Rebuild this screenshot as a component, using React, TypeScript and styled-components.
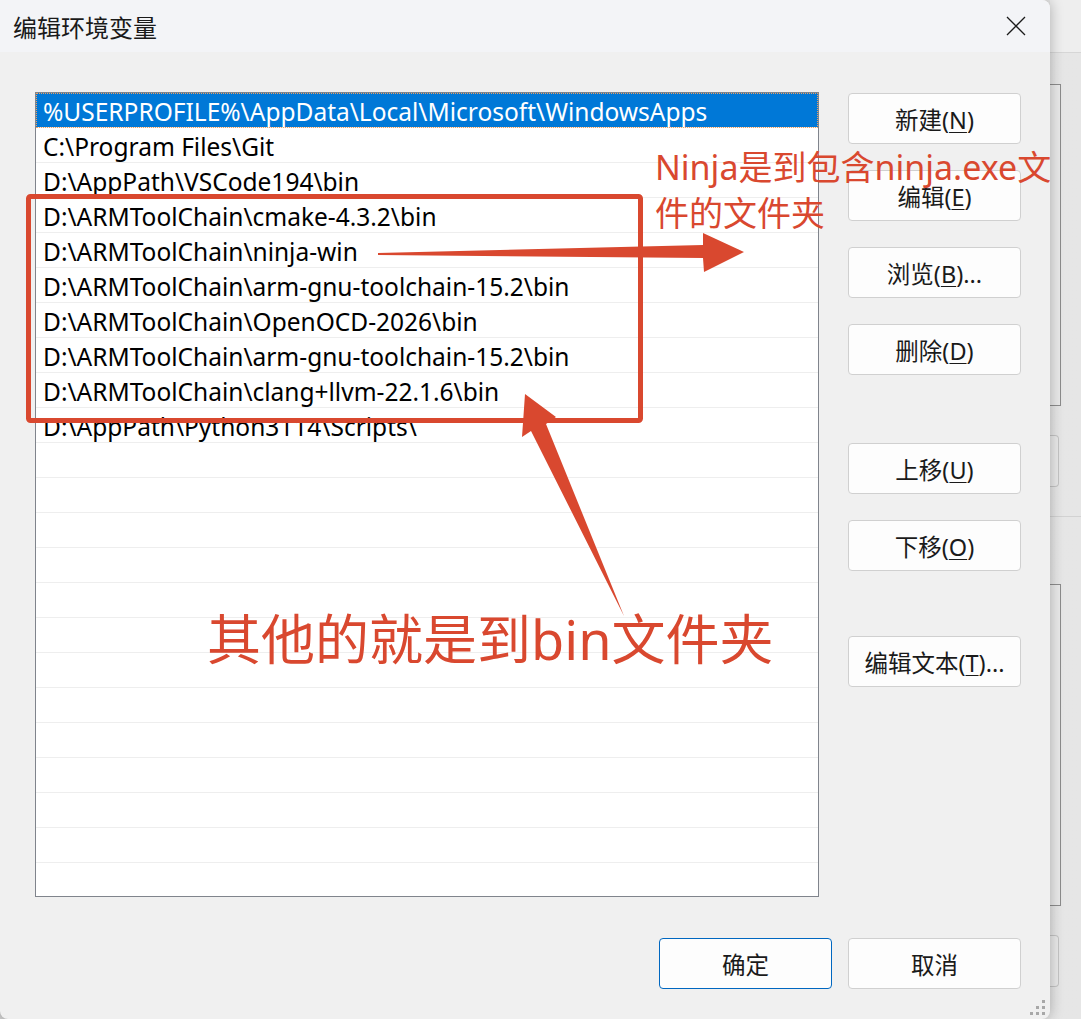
import React from 'react';
import styled, { createGlobalStyle } from 'styled-components';

const GlobalStyle = createGlobalStyle`
  html, body {
    margin: 0;
    padding: 0;
    background: #e4e4e4;
  }
  body {
    font-family: "Noto Sans", "Noto Sans CJK SC", sans-serif;
    color: #1a1a1a;
  }
`;

const RED = '#d9482f';

const paths = [
  '%USERPROFILE%\\AppData\\Local\\Microsoft\\WindowsApps',
  'C:\\Program Files\\Git',
  'D:\\AppPath\\VSCode194\\bin',
  'D:\\ARMToolChain\\cmake-4.3.2\\bin',
  'D:\\ARMToolChain\\ninja-win',
  'D:\\ARMToolChain\\arm-gnu-toolchain-15.2\\bin',
  'D:\\ARMToolChain\\OpenOCD-2026\\bin',
  'D:\\ARMToolChain\\arm-gnu-toolchain-15.2\\bin',
  'D:\\ARMToolChain\\clang+llvm-22.1.6\\bin',
  'D:\\AppPath\\Python3114\\Scripts\\',
];

const ROW_COUNT = 23;

const Page = styled.div`
  display: flex;
  width: 1081px;
  height: 1019px;
  overflow: hidden;
  background: linear-gradient(90deg, #cfcfcf 0%, #e2e2e2 40%, #e6e6e6 100%);
`;

const Dialog = styled.div`
  position: relative;
  flex-shrink: 0;
  width: 1050px;
  height: 1019px;
  display: flex;
  flex-direction: column;
  background: #f0f0f0;
  border-radius: 0 8px 8px 8px;
  box-shadow: 0 0 14px rgba(0, 0, 0, 0.28);
  overflow: hidden;
  z-index: 1;
`;

const TitleBar = styled.div`
  height: 52px;
  flex-shrink: 0;
  display: flex;
  align-items: center;
  justify-content: space-between;
  padding: 0 24px 0 13px;
  background: #f3f4f7;
`;

const Title = styled.span`
  font-family: "Noto Sans CJK SC", sans-serif;
  font-size: 24px;
  color: #1a1a1a;
`;

const Close = styled.svg`
  width: 20px;
  height: 20px;
`;

const Body = styled.div`
  display: flex;
  flex-direction: column;
  padding: 40px 29px 0 35px;
`;

const Main = styled.div`
  display: grid;
  grid-template-columns: 784px 173px;
  column-gap: 29px;
`;

const ListBox = styled.div`
  height: 805px;
  box-sizing: border-box;
  border: 1px solid #80848c;
  background: #ffffff;
  overflow: hidden;
`;

const Row = styled.div<{ $selected?: boolean }>`
  height: 35px;
  box-sizing: border-box;
  display: flex;
  align-items: center;
  padding: 2px 0 0 7px;
  font-size: 24.5px;
  white-space: nowrap;
  border-bottom: 1px solid #eeeeee;
  color: ${({ $selected }) => ($selected ? '#ffffff' : '#000000')};
  background: ${({ $selected }) => ($selected ? '#0078d7' : 'transparent')};
  outline: ${({ $selected }) => ($selected ? '1px dotted #f0a060' : 'none')};
  outline-offset: -1px;
`;

const ButtonColumn = styled.div`
  display: flex;
  flex-direction: column;
  gap: 26px;
  padding-top: 1px;
`;

const Button = styled.button<{ $primary?: boolean; $gapBefore?: number }>`
  width: 173px;
  height: 51px;
  flex-shrink: 0;
  margin-top: ${({ $gapBefore }) => $gapBefore ?? 0}px;
  box-sizing: border-box;
  font-family: "Noto Sans", "Noto Sans CJK SC", sans-serif;
  font-size: 23.5px;
  color: #1a1a1a;
  background: #fdfdfd;
  border: 1px solid ${({ $primary }) => ($primary ? '#0067c0' : '#d0d0d0')};
  border-radius: 4px;
  padding: 0;

  u {
    text-underline-offset: 3px;
    text-decoration-thickness: 1px;
  }
`;

const Footer = styled.div`
  display: flex;
  justify-content: flex-end;
  gap: 16px;
  margin-top: 41px;
`;

const Grip = styled.svg`
  position: absolute;
  right: 3px;
  bottom: 2px;
  width: 18px;
  height: 18px;
`;

/* markup layered over the dialog */
const Marks = styled.svg`
  position: absolute;
  left: 0;
  top: 0;
  width: 1050px;
  height: 1019px;
  pointer-events: none;
`;

const Note = styled.div<{ $size: number; $line: number }>`
  position: absolute;
  font-family: "Noto Sans", "Noto Sans CJK SC", sans-serif;
  font-size: ${({ $size }) => $size}px;
  line-height: ${({ $line }) => $line}px;
  color: ${RED};
  white-space: nowrap;
  pointer-events: none;

  span {
    display: block;
  }
`;

/* window behind the dialog */
const BackStrip = styled.div`
  flex: 1;
  display: flex;
  flex-direction: column;
`;

const BackTitle = styled.div`
  height: 52px;
  background: #eeeeee;
  border-bottom: 1px solid #d6d6d6;
`;

const BackFrame = styled.div<{ $top: number; $height: number }>`
  width: 11px;
  height: ${({ $height }) => $height}px;
  margin-top: ${({ $top }) => $top}px;
  box-sizing: border-box;
  border: 1px solid #8c8c8c;
  border-left: none;
  background: rgba(255, 255, 255, 0.15);
`;

const BackButton = styled.div<{ $top: number }>`
  width: 9px;
  height: 52px;
  margin-top: ${({ $top }) => $top}px;
  box-sizing: border-box;
  border: 1px solid #c4c4c4;
  border-left: none;
  border-radius: 0 4px 4px 0;
  background: #e9e9e9;
`;

const BackRule = styled.div<{ $top: number }>`
  height: 1px;
  margin-top: ${({ $top }) => $top}px;
  background: #d2d2d2;
`;

const Key: React.FC<{ label: string; k: string; tail?: string }> = ({ label, k, tail = '' }) => (
  <>
    {label}(<u>{k}</u>){tail}
  </>
);

export default function App() {
  const rows = Array.from({ length: ROW_COUNT }, (_, i) => paths[i] ?? '');

  return (
    <>
      <GlobalStyle />
      <Page>
        <Dialog>
          <TitleBar>
            <Title>编辑环境变量</Title>
            <Close viewBox="0 0 20 20">
              <path d="M1 1 L19 19 M19 1 L1 19" stroke="#1a1a1a" strokeWidth="1.3" fill="none" />
            </Close>
          </TitleBar>
          <Body>
            <Main>
              <ListBox>
                {rows.map((p, i) => (
                  <Row key={i} $selected={i === 0}>
                    {p}
                  </Row>
                ))}
              </ListBox>
              <ButtonColumn>
                <Button><Key label="新建" k="N" /></Button>
                <Button><Key label="编辑" k="E" /></Button>
                <Button><Key label="浏览" k="B" tail="..." /></Button>
                <Button><Key label="删除" k="D" /></Button>
                <Button $gapBefore={42}><Key label="上移" k="U" /></Button>
                <Button><Key label="下移" k="O" /></Button>
                <Button $gapBefore={39}><Key label="编辑文本" k="T" tail="..." /></Button>
              </ButtonColumn>
            </Main>
            <Footer>
              <Button $primary>确定</Button>
              <Button>取消</Button>
            </Footer>
          </Body>

          <Marks viewBox="0 0 1050 1019">
            <rect x="28.5" y="196.5" width="612" height="224" rx="2" fill="none" stroke={RED} strokeWidth="5" />
            <polygon points="378,253 703,245 703,233 744,252 704,272 703,258 378,255" fill={RED} />
            <polygon points="525,394 556,417 546,424 624,616 531,431 522,437" fill={RED} />
          </Marks>
          <Note $size={34} $line={46} style={{ left: 655, top: 144 }}>
            <span>Ninja是到包含ninja.exe文</span>
            <span>件的文件夹</span>
          </Note>
          <Note $size={54} $line={60} style={{ left: 207, top: 609 }}>
            其他的就是到bin文件夹
          </Note>

          <Grip viewBox="0 0 18 18">
            {[
              [13, 1],
              [7, 7],
              [13, 7],
              [1, 13],
              [7, 13],
              [13, 13],
            ].map(([x, y], i) => (
              <rect key={i} x={x} y={y} width="3" height="3" fill="#a8a8a8" />
            ))}
          </Grip>
        </Dialog>

        <BackStrip>
          <BackTitle />
          <BackFrame $top={31} $height={322} />
          <BackButton $top={29} />
          <BackRule $top={29} />
          <BackFrame $top={67} $height={322} />
          <BackButton $top={29} />
        </BackStrip>
      </Page>
    </>
  );
}
